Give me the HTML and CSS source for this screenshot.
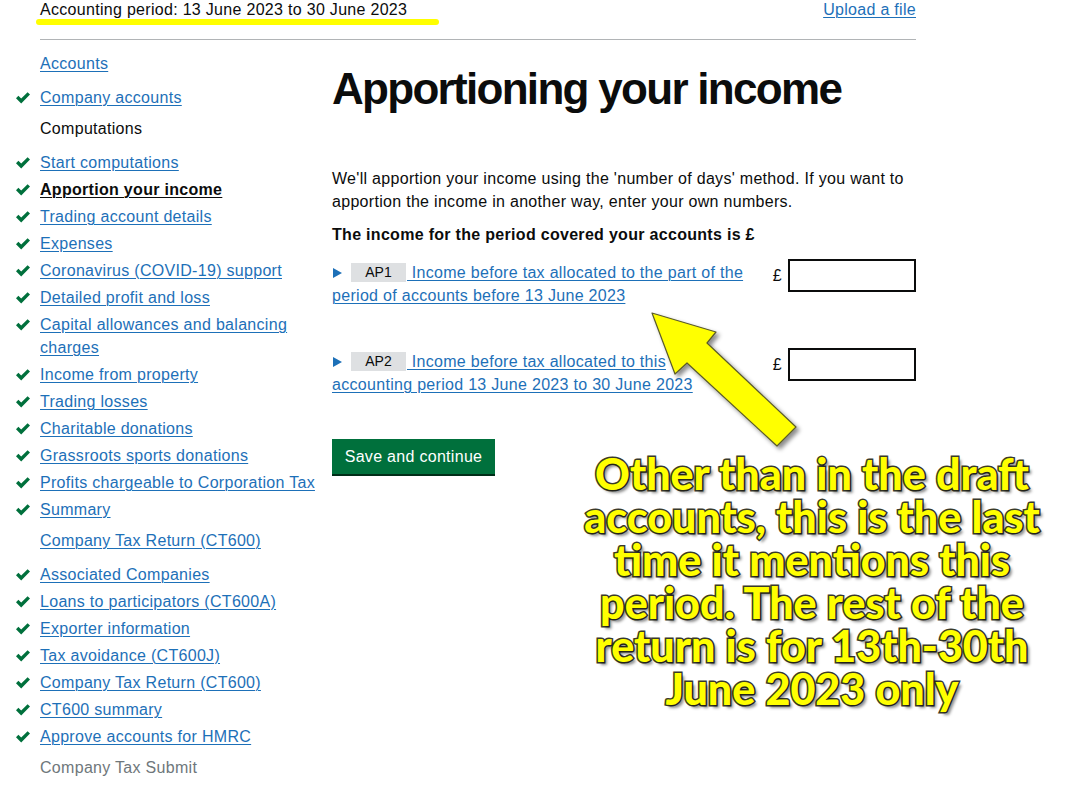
FILE: index.html
```html
<!DOCTYPE html>
<html lang="en">
<head>
    <meta charset="UTF-8">
    <meta name="viewport" content="width=device-width, initial-scale=1.0">
    <title>Apportioning your income</title>
    <link rel="stylesheet" href="styles.css">
</head>
<body>

<div class="page">
    <header class="top-bar">
        <span class="period">Accounting period: 13 June 2023 to 30 June 2023</span>
        <a href="#" class="link">Upload a file</a>
    </header>

    <div class="layout">
        <nav class="side-nav">
            <ul class="nav-group">
                <li class="nav-title"><a href="#" class="link">Accounts</a></li>
                <li class="done"><a href="#" class="link">Company accounts</a></li>
            </ul>
            <ul class="nav-group">
                <li class="nav-title">Computations</li>
                <li class="done"><a href="#" class="link">Start computations</a></li>
                <li class="done"><a href="#" class="link current">Apportion your income</a></li>
                <li class="done"><a href="#" class="link">Trading account details</a></li>
                <li class="done"><a href="#" class="link">Expenses</a></li>
                <li class="done"><a href="#" class="link">Coronavirus (COVID-19) support</a></li>
                <li class="done"><a href="#" class="link">Detailed profit and loss</a></li>
                <li class="done"><a href="#" class="link">Capital allowances and balancing charges</a></li>
                <li class="done"><a href="#" class="link">Income from property</a></li>
                <li class="done"><a href="#" class="link">Trading losses</a></li>
                <li class="done"><a href="#" class="link">Charitable donations</a></li>
                <li class="done"><a href="#" class="link">Grassroots sports donations</a></li>
                <li class="done"><a href="#" class="link">Profits chargeable to Corporation Tax</a></li>
                <li class="done"><a href="#" class="link">Summary</a></li>
            </ul>
            <ul class="nav-group">
                <li class="nav-title"><a href="#" class="link">Company Tax Return (CT600)</a></li>
                <li class="done"><a href="#" class="link">Associated Companies</a></li>
                <li class="done"><a href="#" class="link">Loans to participators (CT600A)</a></li>
                <li class="done"><a href="#" class="link">Exporter information</a></li>
                <li class="done"><a href="#" class="link">Tax avoidance (CT600J)</a></li>
                <li class="done"><a href="#" class="link">Company Tax Return (CT600)</a></li>
                <li class="done"><a href="#" class="link">CT600 summary</a></li>
                <li class="done"><a href="#" class="link">Approve accounts for HMRC</a></li>
            </ul>
            <ul class="nav-group">
                <li class="nav-title muted">Company Tax Submit</li>
            </ul>
        </nav>

        <main class="content">
            <h1>Apportioning your income</h1>

            <p class="intro">We'll apportion your income using the 'number of days' method. If you want to apportion the income in another way, enter your own numbers.</p>

            <p class="lead">The income for the period covered your accounts is £</p>

            <div class="field-row">
                <div class="field-label"><span class="arrow"></span><span class="box-code">AP1</span><a href="#" class="link">&nbsp;Income before tax allocated to the part of the period of accounts before 13 June 2023</a></div>
                <span class="pound">£</span>
                <input type="text" class="amount">
            </div>

            <div class="field-row">
                <div class="field-label"><span class="arrow"></span><span class="box-code">AP2</span><a href="#" class="link">&nbsp;Income before tax allocated to this accounting period 13 June 2023 to 30 June 2023</a></div>
                <span class="pound">£</span>
                <input type="text" class="amount">
            </div>

            <button class="btn-save">Save and continue</button>
        </main>
    </div>
</div>

<!-- annotation drawn over the screenshot -->
<svg class="callout-arrow" width="1090" height="800" viewBox="0 0 1090 800">
    <defs>
        <filter id="shadow" x="-20%" y="-20%" width="140%" height="140%">
            <feDropShadow dx="3" dy="3" stdDeviation="2" flood-color="#000" flood-opacity="0.45"/>
        </filter>
    </defs>
    <polygon points="652,313 716,332 707,343 796,427 777,446 687,363 675,374"
             fill="#ffff00" stroke="#5a5a2a" stroke-width="1.2" stroke-linejoin="round" filter="url(#shadow)"/>
</svg>

<div class="callout-text">Other than in the draft accounts, this is the last time it mentions this period. The rest of the return is for 13th-30th June 2023 only</div>

</body>
</html>
```

FILE: styles.css
```css
body {
    margin: 0;
    font-family: "Liberation Sans", Arial, sans-serif;
    font-size: 16px;
    line-height: 23px;
    letter-spacing: 0.3px;
    color: #0b0c0c;
    background-color: #fff;
}

.page {
    width: 876px;
    margin-left: 40px;
}

.link {
    color: #1d70b8;
    text-decoration: underline;
    text-underline-offset: 2px;
    text-decoration-thickness: 1px;
}

.top-bar {
    display: flex;
    justify-content: space-between;
    height: 39px;
    line-height: 20px;
    border-bottom: 1px solid #b1b4b6;
}

.period {
    position: relative;
}

.period::after {
    content: "";
    position: absolute;
    left: -4px;
    right: -32px;
    top: 19px;
    height: 6px;
    border-radius: 3px;
    background-color: #ffff00;
}

.layout {
    display: flex;
}

.side-nav {
    width: 292px;
    flex-shrink: 0;
    padding-top: 12px;
}

.nav-group {
    list-style: none;
    margin: 0 0 0 -25px;
    padding: 0 0 4px;
}

.nav-group li {
    padding-left: 25px;
    margin-bottom: 4px;
    position: relative;
}

.nav-group .nav-title {
    margin-bottom: 11px;
}

.nav-title.muted {
    color: #6f777b;
}

.nav-group li.done::before {
    content: "";
    position: absolute;
    left: 0;
    top: 5px;
    width: 16px;
    height: 13px;
    background: url("data:image/svg+xml;utf8,<svg xmlns='http://www.w3.org/2000/svg' viewBox='0 0 16 13'><path d='M1 7.2 L3.4 4.8 L6.2 7.6 L12.6 1.2 L15 3.6 L6.2 12.4 Z' fill='%2300703c'/></svg>") no-repeat;
}

.link.current {
    color: #0b0c0c;
    font-weight: bold;
}

.content {
    flex: 1;
}

h1 {
    font-size: 44px;
    line-height: 50px;
    letter-spacing: -1.7px;
    margin: 24px 0 53px;
}

.intro {
    margin: 0 0 10px;
}

.lead {
    font-weight: bold;
    margin: 0 0 13px;
}

.field-row {
    display: grid;
    grid-template-columns: 415px 1fr 128px;
    align-items: start;
    margin-bottom: 41px;
}

.field-label {
    margin-top: 2px;
    line-height: 23px;
}

.arrow {
    display: inline-block;
    width: 0;
    height: 0;
    border-top: 5px solid transparent;
    border-bottom: 5px solid transparent;
    border-left: 9px solid #1d70b8;
    margin: 0 9px 0 1px;
    vertical-align: 0;
}

.box-code {
    display: inline-block;
    vertical-align: top;
    margin-top: 2px;
    margin-right: 1px;
    background-color: #dee0e2;
    font-size: 14px;
    line-height: 19px;
    letter-spacing: 0;
    width: 55px;
    text-align: center;
    color: #0b0c0c;
}

.pound {
    justify-self: end;
    margin-right: 6px;
    margin-top: 5px;
}

.amount {
    box-sizing: border-box;
    width: 128px;
    height: 33px;
    border: 2px solid #0b0c0c;
    border-radius: 0;
    margin: 0;
}

.btn-save {
    margin-top: 2px;
    font-family: inherit;
    font-size: 16px;
    letter-spacing: 0.3px;
    color: #fff;
    background-color: #00703c;
    border: none;
    width: 163px;
    height: 35px;
    box-shadow: 0 2px 0 #002d18;
    cursor: pointer;
}

.callout-arrow {
    position: absolute;
    left: 0;
    top: 0;
    pointer-events: none;
}

.callout-text {
    position: absolute;
    left: 562px;
    top: 452px;
    width: 500px;
    text-align: center;
    font-family: Lato, "Open Sans", sans-serif;
    font-weight: 900;
    font-size: 43px;
    line-height: 43px;
    letter-spacing: 0;
    color: #ffff00;
    -webkit-text-stroke: 3px #3a3a2a;
    paint-order: stroke fill;
    text-shadow: 3px 3px 3px rgba(0, 0, 0, 0.45);
}
```
